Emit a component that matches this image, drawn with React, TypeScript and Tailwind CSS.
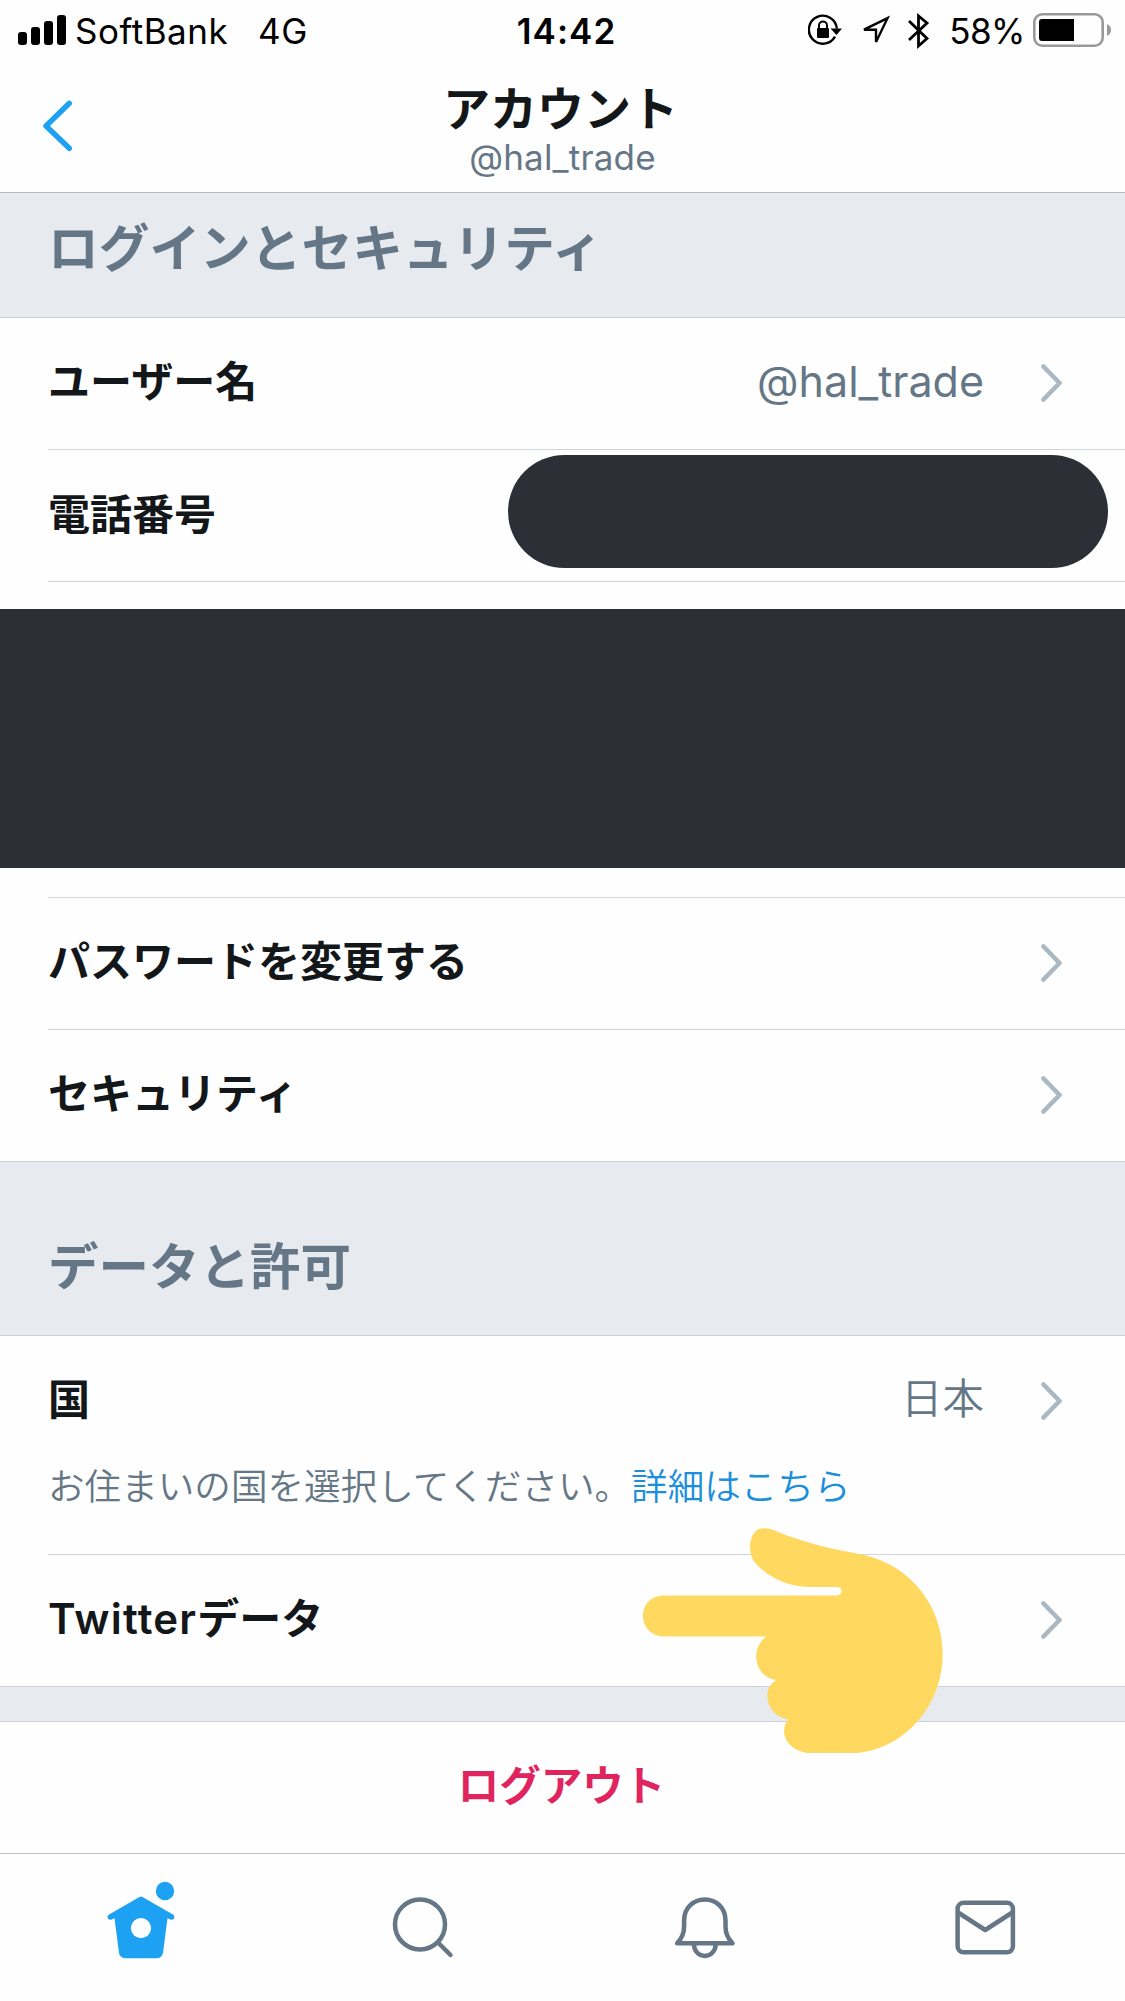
import type { ReactNode } from "react";

function Chevron() {
  return (
    <svg className="-mt-[2px] h-[40px] w-[22px] shrink-0" viewBox="0 0 22 40" fill="none" stroke="#aab8c2" strokeWidth="4.6" strokeLinecap="round" strokeLinejoin="round">
      <path d="M3.500 3.500 19.500 20 3.500 36.500" />
    </svg>
  );
}

function StatusBar() {
  return (
    <div className="grid h-[60px] grid-cols-3 text-[35px] leading-[60px] text-black">
      <div className="flex pl-[18px]">
        <div className="mt-[15px] flex h-[30px] items-end gap-[4px]">
          <i className="h-[13px] w-[9px] rounded-[3px] bg-black" />
          <i className="h-[18px] w-[9px] rounded-[3px] bg-black" />
          <i className="h-[24px] w-[9px] rounded-[3px] bg-black" />
          <i className="h-[30px] w-[9px] rounded-[3px] bg-black" />
        </div>
        <span className="ml-[9px] mt-px tracking-[0.5px]">SoftBank</span>
        <span className="ml-[30px] mt-px tracking-[0.5px]">4G</span>
      </div>
      <div className="mt-px pl-[8px] text-center font-semibold tracking-[1px]">14:42</div>
      <div className="flex justify-end pr-[13px]">
        <svg className="mt-[14px] h-[32px] w-[34px]" viewBox="0 0 34 32" fill="none" stroke="#000">
          <path d="M27 22.700A14 14 0 1 1 28.800 14.500" strokeWidth="2.400" />
          <path d="M22.500 14.500h11.500L28.500 21z" fill="#000" stroke="none" />
          <rect x="9" y="14" width="12" height="10" rx="1" fill="#000" stroke="none" />
          <path d="M11 15v-3.500a4 4 0 0 1 8 0V15" strokeWidth="2" />
        </svg>
        <svg className="ml-[17px] mt-[15px] h-[32px] w-[32px]" viewBox="0 0 32 32" fill="none" stroke="#000" strokeWidth="2.400">
          <path d="M28.500 3.200 5 14.700H17V27z" />
        </svg>
        <svg className="ml-[17px] mt-[12px] h-[38px] w-[22px]" viewBox="0 0 22 38" fill="none" stroke="#000" strokeWidth="2.800">
          <path d="M1 9 19 26.500 10.500 34V4L19 11 1 28" />
        </svg>
        <span className="ml-[19px] mt-px tracking-[-0.5px]">58%</span>
        <svg className="ml-[8px] mt-[13px] h-[34px] w-[79px]" viewBox="0 0 79 34">
          <rect x="1.300" y="1.300" width="68.400" height="31.400" rx="8" fill="none" stroke="#999" strokeWidth="2.600" />
          <rect x="6" y="6" width="35" height="22" rx="3" />
          <path d="M37 6h4v22h-4z" />
          <path d="M74 11q4 2 4 6t-4 6z" fill="#999" />
        </svg>
      </div>
    </div>
  );
}

function Header() {
  return (
    <header className="grid h-[133px] grid-cols-3 border-b border-[#b3bac4]">
      <div className="pl-[43px] pt-[40px]">
        <svg className="h-[52px] w-[30px]" viewBox="0 0 30 52" fill="none" stroke="#1da1f2" strokeWidth="5.400" strokeLinecap="round" strokeLinejoin="round">
          <path d="M26.300 3.300 3 26l23.300 22.300" />
        </svg>
      </div>
      <div className="flex flex-col items-center">
        <h1 className="mt-[21px] pr-[4px] text-[47px] font-bold leading-[56px] text-[#14171a]">アカウント</h1>
        <p className="text-[35px] leading-[40px] tracking-[0.2px] text-[#657786]">@hal_trade</p>
      </div>
    </header>
  );
}

function Row({ label, value, last, children }: { label: ReactNode; value?: ReactNode; last?: boolean; children?: ReactNode }) {
  return (
    <div className={last ? "relative h-[131px] pl-[48px]" : "relative h-[132px] pl-[48px]"}>
      <div className={last ? "flex h-full items-center pr-[63px]" : "flex h-full items-center border-b border-[#cfd5db] pr-[63px]"}>
        <span className="-mt-[3px] flex-1 text-[42px] font-bold leading-[60px] text-[#14171a]">{label}</span>
        {value && <span className="-mt-[5px] mr-[56px] text-[43px] leading-[60px] text-[#657786]">{value}</span>}
        <Chevron />
      </div>
      {children}
    </div>
  );
}

function PointingHand() {
  return (
    <svg className="absolute left-[642.500px] top-[-27.500px] h-[225.500px] w-[300px]" viewBox="127 82 896 676" preserveAspectRatio="none" fill="#ffd95f">
      <path d="M190 284H706Q720 282 720 271Q720 259 706 259H625C545 258 490 220 460 184C440 158 443 108 467 88C482 80 504 81 525 92C610 127 690 146 785 162C930 195 1022 320 1022 460C1022 620 900 758 740 758H635C580 757 548 725 548 690Q549 668 562 656C522 650 498 620 498 583Q499 556 524 538C488 532 465 503 465 466Q466 430 495 407H190C150 406 127 380 127 345C127 311 151 284 190 284Z" />
    </svg>
  );
}

function TabBar() {
  return (
    <nav className="grid h-[148px] grid-cols-4 border-t border-[#bcc3ca]">
      <div className="flex justify-center pt-[26px]">
        <svg className="h-[90px] w-[80px]" viewBox="101 1880 80 90" fill="#1da1f2">
          <circle cx="165" cy="1891" r="9.2" />
          <path fillRule="evenodd" d="M139.500 1897q1.500-1 3 0l30 17.300c4 2.500 1 7-2.500 5l-2.500-1-4.400 34q-.8 6-7 6h-30.200q-6.200 0-7-6l-4.400-34-2.500 1c-3.500 2-6.500-2.500-2.500-5zM141 1918a10 10 0 1 0 0 20.200a10 10 0 1 0 0-20.200z" />
        </svg>
      </div>
      <div className="flex justify-center pt-[26px]">
        <svg className="h-[90px] w-[80px]" viewBox="382 1880 80 90" fill="none" stroke="#657786" strokeWidth="4.500" strokeLinecap="round">
          <circle cx="420" cy="1924.400" r="25" />
          <path d="m438.500 1943 12 12" />
        </svg>
      </div>
      <div className="flex justify-center pt-[26px]">
        <svg className="h-[90px] w-[80px]" viewBox="663.400 1880 80 90" fill="none" stroke="#657786" strokeWidth="4.500" strokeLinejoin="round">
          <path d="M677.500 1943.300c5-5 7-10 7-17v-6c0-12 9-20.700 20.700-20.700s20.700 8.700 20.700 20.700v6c0 7 2 12 7 17zM694.200 1943.500c0 7 4.700 12.500 11 12.500s11-5.500 11-12.500" />
        </svg>
      </div>
      <div className="flex justify-center pt-[26px]">
        <svg className="h-[90px] w-[80px]" viewBox="944.400 1880 80 90" fill="none" stroke="#657786" strokeWidth="4.500" strokeLinejoin="round">
          <rect x="958" y="1902.800" width="55.300" height="49.500" rx="6" />
          <path d="m958.500 1912.500 27.100 17.500 27.100-17.500" />
        </svg>
      </div>
    </nav>
  );
}

export default function App() {
  return (
    <div className="flex h-[2001px] w-[1125px] flex-col overflow-hidden bg-[#fefefe] font-[Inter,'Noto_Sans_CJK_JP',sans-serif]">
      <StatusBar />
      <Header />
      <h2 className="h-[125px] border-b border-[#cbd2d9] bg-[#e7ebf0] pl-[48px] pt-[23px] text-[50.700px] font-bold leading-[66px] text-[#657786]">ログインとセキュリティ</h2>
      <Row label="ユーザー名" value="@hal_trade" />
      <div className="ml-[48px] flex h-[132px] items-start justify-between border-b border-[#cfd5db] pr-[17px]">
        <span className="mt-[35px] text-[42px] font-bold leading-[60px] text-[#14171a]">電話番号</span>
        <div className="mt-[4.500px] h-[113px] w-[600px] rounded-full bg-[#2d2f36]" />
      </div>
      <div className="h-[316px] pt-[27px]">
        <div className="h-[259px] bg-[#2d2f36]" />
        <div className="ml-[48px] h-[30px] border-b border-[#cfd5db]" />
      </div>
      <Row label="パスワードを変更する" />
      <Row label="セキュリティ" last />
      <h2 className="h-[175px] border-y border-[#cbd2d9] bg-[#e7ebf0] pl-[48px] pt-[72px] text-[50.500px] font-bold leading-[66px] text-[#657786]">データと許可</h2>
      <div className="h-[219px] pl-[48px]">
        <div className="h-full border-b border-[#cfd5db]">
          <div className="flex h-[131px] items-center pr-[63px]">
            <span className="-mt-[3px] flex-1 text-[42px] font-bold leading-[60px] text-[#14171a]">国</span>
            <span className="-mt-[5px] mr-[56px] text-[41.500px] font-[350] leading-[60px] text-[#657786]">日本</span>
            <Chevron />
          </div>
          <p className="-mt-[4px] text-[36.600px] font-[350] leading-[48px] text-[#657786]">
            お住まいの国を選択してください。<a className="text-[#1b8fdc]">詳細はこちら</a>
          </p>
        </div>
      </div>
      <Row label={<><span className="font-semibold tracking-[1.200px]">Twitter</span>データ</>} last>
        <PointingHand />
      </Row>
      <div className="h-[36px] border-y border-[#cbd2d9] bg-[#e7ebf0]" />
      <button className="h-[131px] pb-[2px] pr-[2px] text-[41.500px] font-bold text-[#e0245e]">ログアウト</button>
      <TabBar />
    </div>
  );
}
